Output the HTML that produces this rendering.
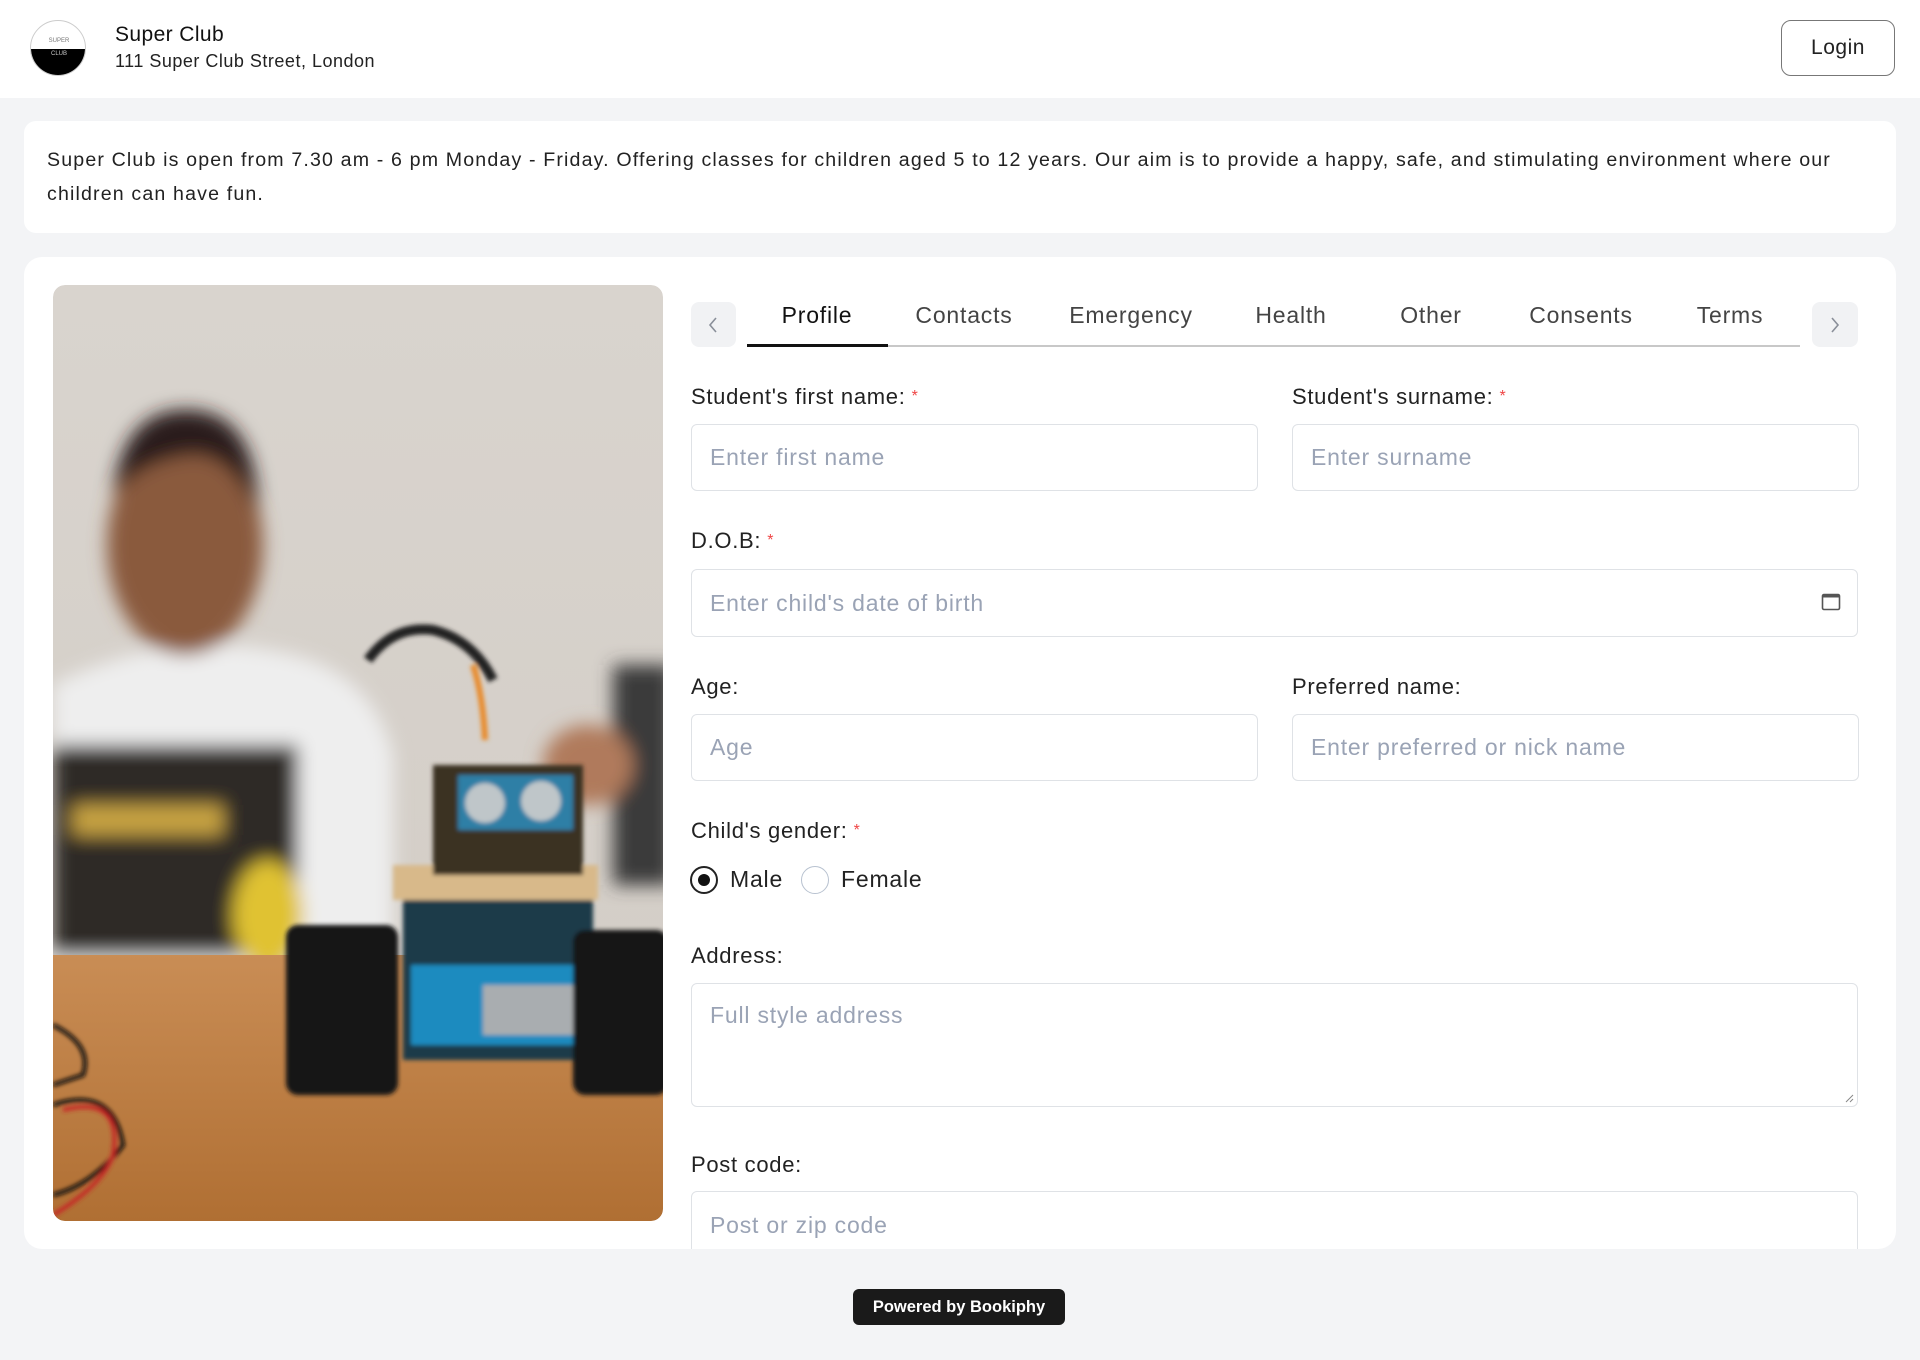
<!DOCTYPE html>
<html><head><meta charset="utf-8"><style>
*{box-sizing:border-box;margin:0;padding:0}
body{width:1920px;height:1360px;background:#f3f4f6;font-family:"Liberation Sans",sans-serif;color:#1f1f1f;position:relative;overflow:hidden}
.abs{position:absolute}
.hdr{left:0;top:0;width:1920px;height:98px;background:#fff}
.card{background:#fff;border-radius:18px}
.lbl{font-size:22px;color:#222;letter-spacing:.7px}
.lbl i{color:#ef4444;font-style:normal;font-size:16px;margin-left:6px;position:relative;top:-3px}
.inp{border:1px solid #dfe2e6;border-radius:6px;background:#fff;font-size:23px;color:#9aa3b5;padding-left:18px;display:flex;align-items:center;letter-spacing:.8px}
.tab{top:302px;font-size:23px;color:#444;letter-spacing:.8px;transform:translateX(-50%);white-space:nowrap}
</style></head><body>
<div class="abs hdr"></div>
<div class="abs" style="left:30px;top:20px;width:56px;height:56px;border-radius:50%;border:1px solid #ccc;overflow:hidden;background:#fff">
 <div class="abs" style="left:0;top:28px;width:56px;height:28px;background:#000"></div>
 <div class="abs" style="left:0;top:17px;width:56px;text-align:center;font-size:6px;color:#777">SUPER</div>
 <div class="abs" style="left:0;top:30px;width:56px;text-align:center;font-size:6px;color:#ccc">CLUB</div>
</div>
<div class="abs" style="left:115px;top:23px;font-size:21px;color:#111;letter-spacing:.4px">Super Club</div>
<div class="abs" style="left:115px;top:51px;font-size:18px;color:#222;letter-spacing:.5px">111 Super Club Street, London</div>
<div class="abs" style="left:1781px;top:20px;width:114px;height:56px;border:1.5px solid #777;border-radius:10px;font-size:21px;display:flex;align-items:center;justify-content:center;color:#222;letter-spacing:.5px">Login</div>

<div class="abs card" style="left:24px;top:121px;width:1872px;height:112px;border-radius:12px"></div>
<div class="abs" style="left:47px;top:143px;width:1830px;font-size:19.6px;line-height:34px;color:#222;letter-spacing:1.15px">Super Club is open from 7.30 am - 6 pm Monday - Friday. Offering classes for children aged 5 to 12 years. Our aim is to provide a happy, safe, and stimulating environment where our children can have fun.</div>

<div class="abs card" style="left:24px;top:257px;width:1872px;height:992px;overflow:hidden">
</div>
<svg class="abs" style="left:53px;top:285px;border-radius:12px" width="610" height="936" viewBox="0 0 610 936">
<defs><filter id="b"><feGaussianBlur stdDeviation="9"/></filter><filter id="s"><feGaussianBlur stdDeviation="2"/></filter>
<linearGradient id="w" x1="0" y1="0" x2="0" y2="1"><stop offset="0" stop-color="#d9d4ce"/><stop offset="1" stop-color="#d2ccc5"/></linearGradient>
<linearGradient id="t" x1="0" y1="0" x2="0" y2="1"><stop offset="0" stop-color="#c98d55"/><stop offset="1" stop-color="#b06f33"/></linearGradient>
<clipPath id="c"><rect width="610" height="936" rx="12"/></clipPath></defs>
<g clip-path="url(#c)">
<rect width="610" height="936" fill="url(#w)"/>
<g filter="url(#b)">
<path d="M0 400 Q120 340 240 370 Q320 390 340 470 L340 680 L0 680Z" fill="#eeeeee"/>
<ellipse cx="132" cy="260" rx="78" ry="110" fill="#8a5a3e"/>
<path d="M60 210 Q70 120 140 125 Q205 130 205 230 Q180 170 140 170 Q90 175 60 210Z" fill="#2b1f1a"/>
<rect x="560" y="380" width="60" height="220" fill="#3a3a3a"/>
<ellipse cx="535" cy="480" rx="45" ry="40" fill="#b07a5c"/>
<rect x="0" y="460" width="245" height="210" fill="#2f2c28"/>
<rect x="20" y="520" width="150" height="30" fill="#c7a342"/>
<ellipse cx="215" cy="630" rx="35" ry="55" fill="#e0c230"/>
</g>
<rect y="670" width="610" height="266" fill="url(#t)"/>
<g filter="url(#s)">
<path d="M315 375 Q340 340 380 345 Q420 355 440 395" stroke="#222" stroke-width="10" fill="none"/>
<path d="M420 380 Q430 410 432 455" stroke="#e88a2a" stroke-width="6" fill="none"/>
<rect x="340" y="580" width="205" height="35" fill="#d8b98a"/>
<rect x="350" y="615" width="190" height="160" fill="#1a3a4a"/>
<rect x="358" y="680" width="180" height="80" fill="#1b8bbf"/>
<rect x="430" y="700" width="90" height="50" fill="#a9adb0"/>
<rect x="380" y="480" width="150" height="110" fill="#3a3024"/>
<rect x="405" y="490" width="115" height="55" fill="#2d7fa6"/>
<circle cx="432" cy="518" r="20" fill="#bfc6c9"/><circle cx="488" cy="516" r="20" fill="#bfc6c9"/>
<rect x="233" y="640" width="112" height="170" rx="12" fill="#161616"/>
<rect x="520" y="645" width="95" height="165" rx="12" fill="#161616"/>
<path d="M0 740 Q40 760 30 790 L0 800 M0 820 Q60 800 70 860 Q40 900 0 910" stroke="#111" stroke-width="4" fill="none"/>
<path d="M10 825 Q70 810 60 870 Q50 900 0 930" stroke="#c62828" stroke-width="4" fill="none"/>
</g>
</g></svg>

<div class="abs" style="left:691px;top:302px;width:45px;height:45px;background:#f1f2f4;border-radius:8px"></div>
<svg class="abs" style="left:706px;top:315px" width="16" height="20"><path d="M10 3 L4 10 L10 17" stroke="#8a8f99" stroke-width="1.6" fill="none"/></svg>
<div class="abs" style="left:1812px;top:302px;width:46px;height:45px;background:#f1f2f4;border-radius:8px"></div>
<svg class="abs" style="left:1827px;top:315px" width="16" height="20"><path d="M5 3 L11 10 L5 17" stroke="#8a8f99" stroke-width="1.6" fill="none"/></svg>
<div class="abs" style="left:747px;top:345px;width:1053px;height:2px;background:#c8c8c8"></div>
<div class="abs" style="left:747px;top:344px;width:141px;height:3px;background:#111"></div>
<div class="abs tab" style="left:817px;color:#111">Profile</div>
<div class="abs tab" style="left:964px">Contacts</div>
<div class="abs tab" style="left:1131px">Emergency</div>
<div class="abs tab" style="left:1291px">Health</div>
<div class="abs tab" style="left:1431px">Other</div>
<div class="abs tab" style="left:1581px">Consents</div>
<div class="abs tab" style="left:1730px">Terms</div>

<div class="abs lbl" style="left:691px;top:384px">Student's first name:<i>*</i></div>
<div class="abs lbl" style="left:1292px;top:384px">Student's surname:<i>*</i></div>
<div class="abs inp" style="left:691px;top:424px;width:567px;height:67px">Enter first name</div>
<div class="abs inp" style="left:1292px;top:424px;width:567px;height:67px">Enter surname</div>

<div class="abs lbl" style="left:691px;top:528px">D.O.B:<i>*</i></div>
<div class="abs inp" style="left:691px;top:569px;width:1167px;height:68px">Enter child's date of birth</div>
<svg class="abs" style="left:1821px;top:592px" width="20" height="20"><rect x="1.5" y="2.5" width="17" height="15" rx="1.5" stroke="#555" stroke-width="1.6" fill="none"/><rect x="1.5" y="2.5" width="17" height="3" fill="#555"/></svg>

<div class="abs lbl" style="left:691px;top:674px">Age:</div>
<div class="abs lbl" style="left:1292px;top:674px">Preferred name:</div>
<div class="abs inp" style="left:691px;top:714px;width:567px;height:67px">Age</div>
<div class="abs inp" style="left:1292px;top:714px;width:567px;height:67px">Enter preferred or nick name</div>

<div class="abs lbl" style="left:691px;top:818px">Child's gender:<i>*</i></div>
<div class="abs" style="left:690px;top:866px;width:28px;height:28px;border:2px solid #222;border-radius:50%"></div>
<div class="abs" style="left:698px;top:874px;width:12px;height:12px;background:#111;border-radius:50%"></div>
<div class="abs" style="left:730px;top:866px;font-size:23px;color:#222;letter-spacing:.8px">Male</div>
<div class="abs" style="left:801px;top:866px;width:28px;height:28px;border:1.5px solid #b8c2d0;border-radius:50%"></div>
<div class="abs" style="left:841px;top:866px;font-size:23px;color:#222;letter-spacing:.8px">Female</div>

<div class="abs lbl" style="left:691px;top:943px">Address:</div>
<div class="abs inp" style="left:691px;top:983px;width:1167px;height:124px;align-items:flex-start;padding-top:18px">Full style address</div>
<svg class="abs" style="left:1844px;top:1093px" width="10" height="10"><path d="M9 2 L2 9 M9 6 L6 9" stroke="#888" stroke-width="1"/></svg>

<div class="abs lbl" style="left:691px;top:1152px">Post code:</div>
<div class="abs" style="left:691px;top:1191px;width:1167px;height:58px;overflow:hidden"><div class="inp" style="width:1167px;height:68px;padding-bottom:0">Post or zip code</div></div>

<div class="abs" style="left:853px;top:1289px;width:212px;height:36px;background:#1a1a1a;border-radius:6px;color:#fff;font-size:16.5px;font-weight:bold;display:flex;align-items:center;justify-content:center">Powered by Bookiphy</div>
</body></html>
